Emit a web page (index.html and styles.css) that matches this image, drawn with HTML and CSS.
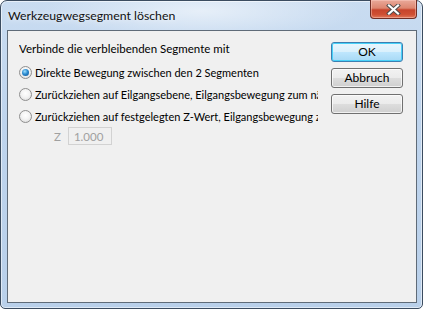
FILE: index.html
```html
<!DOCTYPE html>
<html lang="de">
  <head>
    <meta charset="UTF-8" />
    <title>Werkzeugwegsegment löschen</title>
    <link rel="stylesheet" href="styles.css">
  </head>
  <body>
    <div class="window">
      <div class="titlebar">
        <span class="title">Werkzeugwegsegment löschen</span>
        <button class="close" aria-label="Schließen">
          <svg width="17" height="11" viewBox="0 0 17 11">
            <path d="M4 1.5 L13 9.5 M13 1.5 L4 9.5" stroke="#4a4a4a" stroke-width="4" stroke-linecap="square"/>
            <path d="M4 1.5 L13 9.5 M13 1.5 L4 9.5" stroke="#ffffff" stroke-width="2.2" stroke-linecap="square"/>
          </svg>
        </button>
      </div>
      <div class="client">
        <div class="options">
          <div class="row caption">Verbinde die verbleibenden Segmente mit</div>
          <label class="row radio-row r1">
            <span class="radio checked"></span>
            <span class="radio-text">Direkte Bewegung zwischen den 2 Segmenten</span>
          </label>
          <label class="row radio-row">
            <span class="radio"></span>
            <span class="radio-text">Zurückziehen auf Eilgangsebene, Eilgangsbewegung zum nächsten Segment</span>
          </label>
          <label class="row radio-row">
            <span class="radio"></span>
            <span class="radio-text">Zurückziehen auf festgelegten Z-Wert, Eilgangsbewegung zum nächsten Segment</span>
          </label>
          <div class="z-row">
            <span class="z-label">Z</span>
            <span class="z-input">1.000</span>
          </div>
        </div>
        <div class="buttons">
          <button class="btn default">OK</button>
          <button class="btn">Abbruch</button>
          <button class="btn">Hilfe</button>
        </div>
      </div>
    </div>
  </body>
</html>
```

FILE: styles.css
```css
html,
body {
  margin: 0;
  padding: 0;
  background: #ffffff;
}

body {
  font-family: Lato, "Liberation Sans", sans-serif;
  font-size: 11.5px;
  color: #000;
}

.window {
  box-sizing: border-box;
  width: 423px;
  height: 309px;
  border: 1px solid #3b4c60;
  border-radius: 7px 7px 5px 5px;
  padding: 0 5px 5px 6px;
  display: flex;
  flex-direction: column;
  background:
    radial-gradient(ellipse 160px 30px at 200px 10px, rgba(255, 255, 255, 0.55), rgba(255, 255, 255, 0)),
    linear-gradient(to bottom, #c9dcf1 0%, #bed4ed 40%, #b9d0ea 100%);
  box-shadow: inset 0 0 0 1px rgba(255, 255, 255, 0.55);
}

.titlebar {
  height: 29px;
  display: flex;
  align-items: flex-start;
  justify-content: space-between;
}

.title {
  margin: 7px 0 0 1px;
  font-size: 12.3px;
  line-height: 16px;
  color: #111;
  text-shadow: 0 0 6px rgba(255, 255, 255, 0.9);
}

.close {
  width: 47px;
  height: 19px;
  margin: -1px 0 0 0;
  padding: 0;
  border: 1px solid #6f2e26;
  border-top: none;
  border-radius: 0 0 4px 4px;
  background: linear-gradient(to bottom, #e9a99a 0%, #dd8670 45%, #c7442c 55%, #cf4f33 80%, #e0775a 100%);
  box-shadow: inset 0 0 0 1px rgba(255, 210, 200, 0.45);
  display: flex;
  align-items: center;
  justify-content: center;
}

.client {
  flex: 1;
  border: 1px solid #5f6b78;
  background: #f0f0f0;
  display: flex;
  padding: 6px 13px 0 11px;
}

.options {
  width: 299px;
  overflow: hidden;
  white-space: nowrap;
}

.row {
  height: 22px;
  display: flex;
  align-items: center;
}

.r1 {
  margin-top: 2px;
}

.radio-row {
  gap: 3px;
}

.radio-text {
  font-size: 11px;
}

.radio {
  box-sizing: border-box;
  flex: none;
  width: 13px;
  height: 13px;
  border-radius: 50%;
  border: 1px solid #8f8f8f;
  background: radial-gradient(circle at 50% 40%, #ffffff 0%, #f4f4f4 45%, #d6d6d6 100%);
  position: relative;
}

.radio.checked::after {
  content: "";
  position: absolute;
  left: 2px;
  top: 2px;
  width: 7px;
  height: 7px;
  border-radius: 50%;
  background: radial-gradient(circle at 40% 35%, #9fe0ff 0%, #2b8bd0 45%, #0e4b8a 100%);
}

.z-row {
  display: flex;
  align-items: center;
  height: 18px;
  padding-left: 35px;
  gap: 7px;
  color: #a0a0a0;
}

.z-input {
  box-sizing: border-box;
  width: 44px;
  height: 18px;
  border: 1px solid #d2d2d2;
  background: #f0f0f0;
  padding: 0 0 0 5px;
  display: flex;
  align-items: center;
}

.buttons {
  margin-left: auto;
  margin-top: 5px;
  display: flex;
  flex-direction: column;
  gap: 6px;
}

.btn {
  box-sizing: border-box;
  width: 72px;
  height: 20px;
  padding: 0;
  font-family: inherit;
  font-size: 12px;
  line-height: 14px;
  color: #000;
  border: 1px solid #707070;
  border-radius: 3px;
  background: linear-gradient(to bottom, #f2f2f2 0%, #ebebeb 50%, #dddddd 51%, #cfcfcf 100%);
  box-shadow: inset 0 0 0 1px rgba(255, 255, 255, 0.7);
}

.btn.default {
  border-color: #3c7fb1;
  box-shadow: inset 0 0 0 1px #48d1f8;
  background: linear-gradient(to bottom, #eaf6fd 0%, #d9f0fc 50%, #bee6fd 51%, #a7d9f5 100%);
}
```
